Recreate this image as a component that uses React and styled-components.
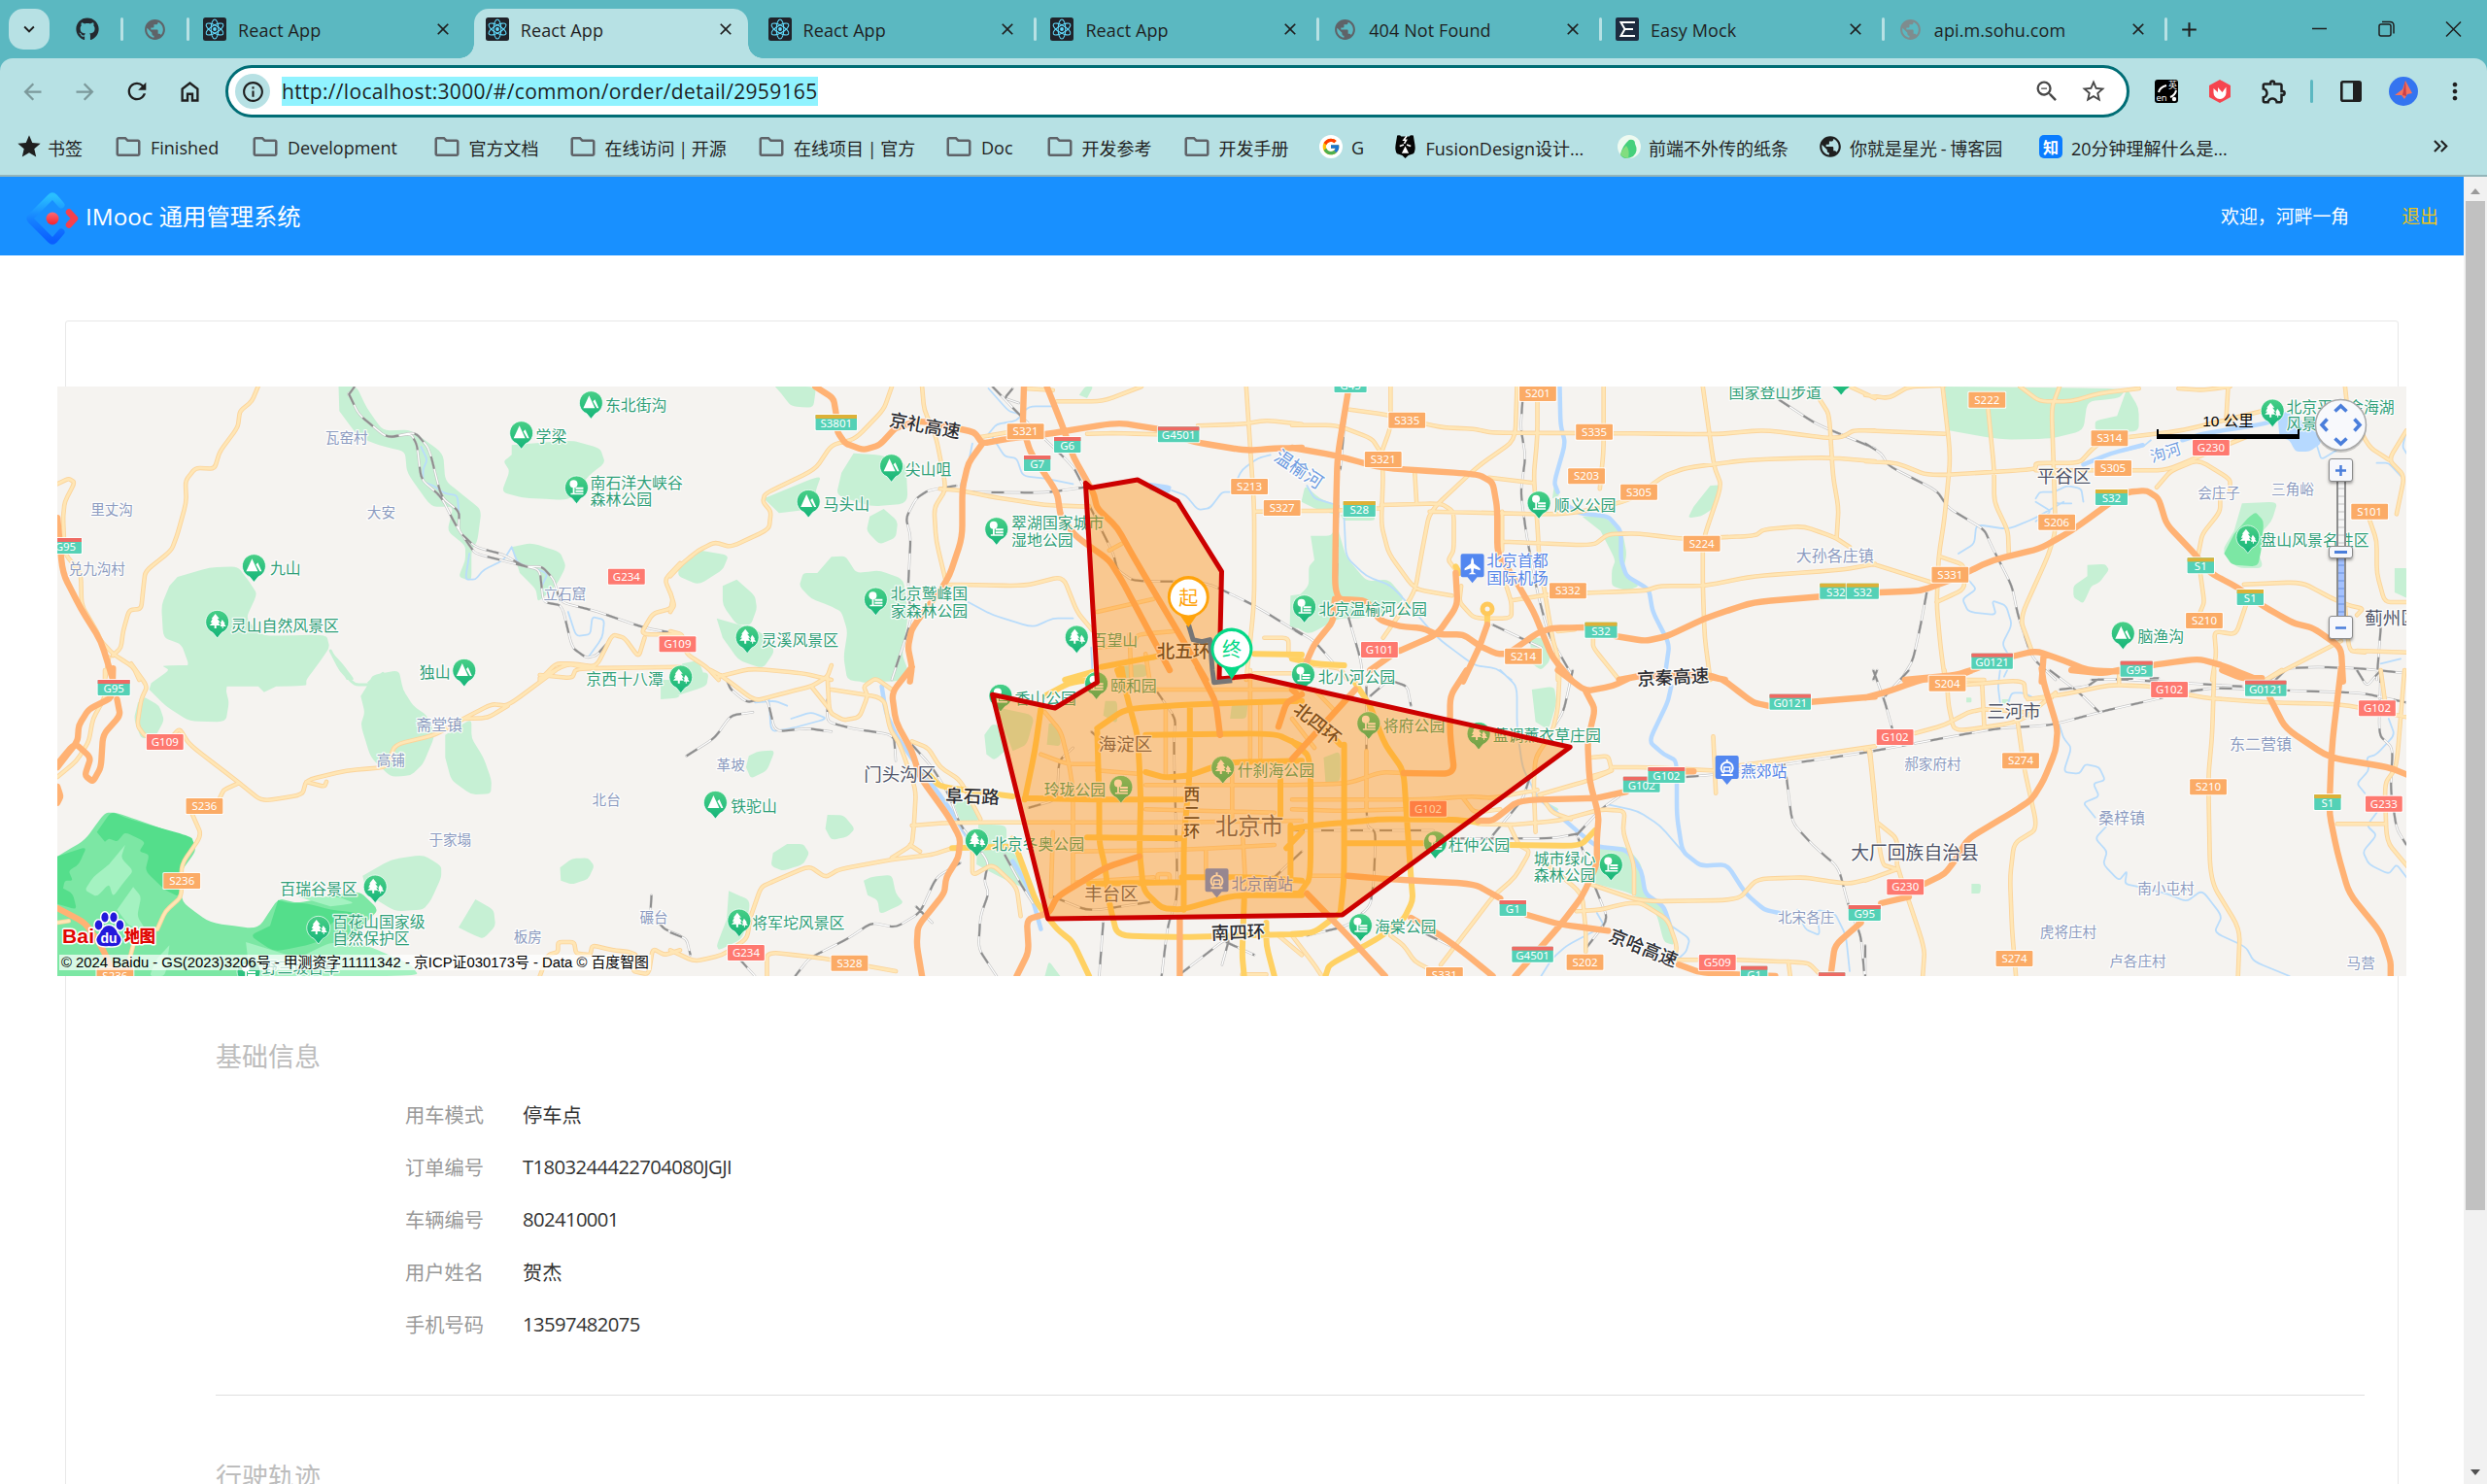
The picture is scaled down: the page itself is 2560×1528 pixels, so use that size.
import React from "react";
import styled, { createGlobalStyle, css } from "styled-components";
import { FaGithub } from "react-icons/fa";
import { FcGoogle } from "react-icons/fc";
import {
  MdArrowBack, MdArrowForward, MdRefresh, MdInfoOutline, MdStarBorder, MdStar,
  MdMoreVert, MdOutlineExtension, MdPublic, MdClose, MdAdd, MdKeyboardArrowDown,
  MdZoomOut, MdOutlineFolder, MdKeyboardDoubleArrowRight,
} from "react-icons/md";

const Global = createGlobalStyle`
  html, body { margin: 0; padding: 0; overflow: hidden; background: #fff; }
  * { box-sizing: border-box; }
  body { font-family: "Open Sans", "Noto Sans CJK SC", sans-serif; color: #1f1f1f; }
`;

const Window = styled.div`
  width: 2560px; height: 1528px; display: flex; flex-direction: column; overflow: hidden;
`;

/* ---------- browser chrome ---------- */
const TabStrip = styled.div`
  height: 60px; flex: none; background: #5bb8c1; display: flex; align-items: center; padding-left: 9px;
`;
const SearchTabs = styled.div`
  width: 42px; height: 42px; border-radius: 15px; background: #b7e1e4;
  display: flex; align-items: center; justify-content: center;
`;
const Pinned = styled.div`
  display: flex; align-items: center; justify-content: center;
  width: ${(p) => p.$w}px; padding-left: ${(p) => p.$pad || 0}px; height: 60px;
`;
const Divider = styled.i`
  width: 3px; height: 24px; border-radius: 2px; flex: none;
  background: ${(p) => (p.$hidden ? "transparent" : "#b7e1e4")};
`;
const TabSlot = styled.div`
  width: 290.8px; height: 60px; display: flex; align-items: center; flex: none;
`;
const TabBody = styled.div`
  position: relative; flex: 1; align-self: stretch; margin: 9px 4px 0 2px; padding: 0 13px 9px 12px;
  display: flex; align-items: center; gap: 12px; font-size: 18px; color: #1f1f1f;
  border-radius: 15px 15px 0 0;
  ${(p) => p.$active && css`
    background: #b7e1e4;
    &::before, &::after { content: ""; position: absolute; bottom: 0; width: 15px; height: 15px; }
    &::before { left: -15px; background: radial-gradient(circle at 0 0, transparent 14.5px, #b7e1e4 15px); }
    &::after { right: -15px; background: radial-gradient(circle at 100% 0, transparent 14.5px, #b7e1e4 15px); }
  `}
`;
const TabTitle = styled.span`
  flex: 1; white-space: nowrap; letter-spacing: 0.1px; position: relative; top: 1px;
`;
const WinButtons = styled.div`
  margin-left: auto; display: flex; padding-right: 0;
  svg { width: 69px; height: 24px; }
`;
const Chrome = styled.div`
  background: linear-gradient(#5bb8c1, #5bb8c1) 0 0/100% 14px no-repeat; height: 122px; flex: none;
`;
const ChromeInner = styled.div`
  background: #b7e1e4; height: 122px; border-radius: 13px 13px 0 0; border-bottom: 2px solid #93b5b9;
`;
const Toolbar = styled.div`
  height: 68px; display: flex; align-items: center;
`;
const NavButton = styled.div`
  width: 54px; display: flex; justify-content: center; color: ${(p) => (p.$dim ? "#7c999b" : "#1f1f1f")};
`;
const NavGroup = styled.div`
  display: flex; align-items: center; padding-left: 6px;
`;
const Omnibox = styled.div`
  width: 1960px; height: 54px; border: 3px solid #006d75; border-radius: 27px; background: #fff;
  display: flex; align-items: center; padding: 0 20px 0 7px; margin-left: 10px;
`;
const InfoChip = styled.div`
  width: 36px; height: 36px; border-radius: 50%; background: #b7e1e4; display: flex;
  align-items: center; justify-content: center; margin-right: 12px;
`;
const Url = styled.span`
  font-size: 21px; line-height: 30px; background: #90f3ff; white-space: nowrap; letter-spacing: 0.32px;
`;
const OmniIcons = styled.div`
  margin-left: auto; display: flex; gap: 20px; color: #474747;
`;
const Extensions = styled.div`
  display: flex; align-items: center; flex: 1; padding-left: 26px;
`;
const Slot = styled.div`
  width: ${(p) => p.$w}px; display: flex; align-items: center;
`;
const ToolDivider = styled.i`
  width: 3px; height: 24px; background: #5bb8c1; border-radius: 2px;
`;
const Bookmarks = styled.div`
  height: 45px; display: flex; align-items: center; padding-left: 16px;
`;
const Bookmark = styled.div`
  width: ${(p) => p.$w}px; display: flex; align-items: center; flex: none; font-size: 18px; white-space: nowrap;
  svg { flex: none; }
  span { margin-left: ${(p) => p.$gap}px; position: relative; top: 1px; word-spacing: -1px; }
`;
const ZhiBadge = styled.b`
  width: 24px; height: 24px; border-radius: 5px; background: #0a7cff; color: #fff; font-size: 16px;
  display: flex; align-items: center; justify-content: center;
`;

/* ---------- page ---------- */
const Viewport = styled.div`
  flex: 1; min-height: 0; display: flex;
`;
const Page = styled.div`
  width: 2536px; height: 100%; overflow: hidden; background: #fff;
`;
const Header = styled.header`
  height: 81px; background: #1890ff; color: #fff; display: flex; align-items: center; padding: 0 26px 0 27px;
`;
const Brand = styled.div`
  display: flex; align-items: center; gap: 7px; font-size: 24.3px; white-space: nowrap; height: 81px;
  span { position: relative; top: -1px; }
  svg { position: relative; top: 2px; }
`;
const UserArea = styled.div`
  margin-left: auto; display: flex; gap: 54px; font-size: 18.9px; padding-bottom: 2px;
`;
const Logout = styled.a`
  color: #f0c414;
`;
const Card = styled.section`
  margin: 67px 67px 0; border: 1px solid #e8e8e8; border-radius: 3px; height: 1400px; padding-top: 67px;
`;
const MapBox = styled.div`
  position: relative; width: 2418px; height: 607px; margin-left: -9px; overflow: hidden; background: #f5f3f0;
`;
const MapSvg = styled.svg`
  display: block; width: 2418px; height: 607px;
  font-family: "Noto Sans", "Noto Sans CJK SC", sans-serif;
`;
const Copyright = styled.div`
  position: absolute; left: 2px; bottom: 6px; padding: 0 2px; background: rgba(255,255,255,.7); color: #000;
  font: 14.85px/16px "Liberation Sans", "Noto Sans CJK SC", sans-serif; white-space: nowrap;
`;
const ScaleBar = styled.div`
  position: absolute; left: 2161px; top: 25px; width: 147px; height: 29px; text-align: center;
  font: 15.5px/21px "Liberation Sans", "Noto Sans CJK SC", sans-serif; color: #000;
  border-bottom: 5px solid #000;
  &::before, &::after { content: ""; position: absolute; bottom: -5px; width: 2px; height: 10px; background: #000; }
  &::before { left: 0; }
  &::after { right: 0; }
`;
const ZoomControl = styled.div`
  position: absolute; left: 2338px; top: 74px; width: 25px; display: flex; flex-direction: column; align-items: center;
`;
const ZoomButton = styled.div`
  width: 25px; height: ${(p) => p.$h || 24}px; border: 1.5px solid #8a8a8a; border-radius: 3px; background: #f6f7fb;
  box-shadow: 0 2px 3px rgba(0,0,0,.35); display: flex; align-items: center; justify-content: center;
  position: relative; z-index: 1;
`;
const Track = styled.div`
  width: 10px; height: ${(p) => p.$h}px; border: solid #8d8d8d; border-width: 0 2px;
  background: repeating-linear-gradient(${(p) => (p.$filled ? "#a3c1ff" : "#f6f6f6")} 0 6.5px, ${(p) => (p.$filled ? "#86a9ee" : "#dcdcdc")} 6.5px 8px);
`;
const Detail = styled.div`
  margin: 0 34px 0 154px; padding-top: 63px;
`;
const SectionTitle = styled.h3`
  margin: 0; font-weight: 400; font-size: 27px; line-height: 40px; color: #bdbdbd;
`;
const InfoList = styled.div`
  padding: 12px 0 46px 195px;
`;
const InfoRow = styled.div`
  display: flex; height: 54px; align-items: center; font-size: 20.25px; color: #333;
`;
const InfoLabel = styled.span`
  width: 121px; color: #999;
`;
const InfoValue = styled.span`
  letter-spacing: ${(p) => (p.$latin ? -0.6 : 0)}px;
`;
const Rule = styled.div`
  height: 1px; background: #dfdfdf; margin-bottom: 64px;
`;
const ScrollRail = styled.div`
  width: 24px; background: #f1f1f1; display: flex; flex-direction: column; align-items: center;
`;
const ScrollThumb = styled.div`
  width: 20px; height: 1039px; background: #c1c1c1; margin-top: 7px;
`;
const ScrollArrow = styled.i`
  width: 0; height: 0; border: solid transparent; border-width: 0 5px;
  ${(p) => p.$up ? "border-bottom: 6px solid #9a9a9a; margin-top: 12px;" : "border-top: 6px solid #505050; margin-top: auto; margin-bottom: 9px;"}
`;

/* ---------- small drawings ---------- */
const ReactFavicon = () => (
  <svg width="24" height="24" viewBox="0 0 24 24">
    <rect width="24" height="24" rx="2.5" fill="#20232a" />
    <g fill="none" stroke="#61dafb" strokeWidth="1.1">
      {[0, 60, 120].map((a) => <ellipse key={a} cx="12" cy="12" rx="10" ry="3.8" transform={`rotate(${a + 30} 12 12)`} />)}
    </g>
    <circle cx="12" cy="12" r="1.9" fill="#61dafb" />
  </svg>
);
const EasyMockIcon = () => (
  <svg width="24" height="24" viewBox="0 0 24 24">
    <rect width="24" height="24" rx="2" fill="#1d2b3f" />
    <path d="M20 5H5.500l4 7H18M9.500 12l-4 7H20" fill="none" stroke="#fff" strokeWidth="2" />
  </svg>
);
const HomeIcon = () => (
  <svg width="27" height="27" viewBox="0 0 24 24" fill="none" stroke="#1f1f1f" strokeWidth="2.1">
    <path d="M5 20V9.5L12 4l7 5.5V20h-4.800v-6H9.800v6z" />
  </svg>
);
const BrandLogo = () => (
  <svg width="54" height="54" viewBox="0 0 54 54">
    <defs>
      <linearGradient id="bl" x1="0" y1="0" x2="0" y2="1"><stop offset="0" stopColor="#29bfff" /><stop offset=".5" stopColor="#1683ff" /><stop offset="1" stopColor="#0a5fff" /></linearGradient>
      <linearGradient id="rd" x1="0" y1="0" x2="0" y2="1"><stop offset="0" stopColor="#fa6a75" /><stop offset="1" stopColor="#f5222d" /></linearGradient>
    </defs>
    <path d="M36 13 29 5q-2-2-4 0L5 25q-2 2 0 4l20 20q2 2 4 0l7-8" fill="none" stroke="url(#bl)" strokeWidth="7" strokeLinecap="round" />
    <path d="M44 20.500 50 27l-6 6.500" fill="none" stroke="#f7404c" strokeWidth="6.500" strokeLinecap="round" strokeLinejoin="round" />
    <circle cx="27" cy="27" r="6.500" fill="url(#rd)" />
  </svg>
);
const PandaIcon = () => (
  <svg width="25" height="25" viewBox="0 0 24 24">
    <path d="M4 1.500q3-1 4 1h8q1-2 4-1l1.500 9q1 6-1.500 9l-5 1.500-3 3-3-3-5-1.500q-2.500-3-1.500-9z" fill="#050505" />
    <path d="M13.500 2l-3 4h2.500l-2 3.500" fill="none" stroke="#fff" strokeWidth="1.500" />
    <path d="M6.500 12l4-1.500M17.500 12l-4-1.500" stroke="#fff" strokeWidth="1.500" />
    <path d="M12 12l3.500 7h-7z" fill="#fff" />
  </svg>
);
const ParrotIcon = () => (
  <svg width="24" height="24" viewBox="0 0 24 24">
    <circle cx="12" cy="12" r="12" fill="#eefaf1" />
    <path d="M3 20Q5 11 12 5q6-1 6 4 4 8-2 13-3 2-8 2-4-1-5-4z" fill="#45d07c" />
    <path d="M3 20Q5 14 9 11q4 5 2 13-6-1-8-4z" fill="#82dd7f" />
  </svg>
);
const TranslateIcon = () => (
  <svg width="24" height="24" viewBox="0 0 24 24">
    <rect width="24" height="24" rx="3" fill="#000" />
    <path d="M4 13Q5 8 12 6M22 11q-1 5-6 7" stroke="#fff" strokeWidth="2" fill="none" />
    <text x="1.500" y="22" fontSize="9.500" fill="#fff">en</text>
    <text x="14" y="9" fontSize="9" fill="#fff">英</text>
    <circle cx="20" cy="20" r="2.200" fill="#fff" />
  </svg>
);
const HexIcon = () => (
  <svg width="24" height="26" viewBox="0 0 24 26">
    <path d="M12 1l11 6v12l-11 6-11-6V7z" fill="#f6454f" />
    <path d="M5.500 10v4.500a6.500 6.500 0 0 0 13 0V8.500l-4 5.500-4.500-5v5z" fill="#fff" />
  </svg>
);
const PanelIcon = () => (
  <svg width="22" height="22" viewBox="0 0 22 22"><rect x="1.300" y="1.300" width="19.400" height="19.400" rx="1.500" fill="none" stroke="#1f1f1f" strokeWidth="2.600" /><path d="M13 1h8v20h-8z" fill="#1f1f1f" /></svg>
);
const Avatar = () => (
  <svg width="30" height="30" viewBox="0 0 30 30">
    <circle cx="15" cy="15" r="15" fill="#3474f0" />
    <path d="M17 4l7 13-5 1-3 5-3-4-7 0 8-6z" fill="#f4715f" /><path d="M17 4l1 16-4-1z" fill="#c9404b" />
  </svg>
);

/* ---------- map data ----------
   Every map sheet keeps its own survey grid: [originX, originY, unitsPerX]. */
const SHEETS = {
  a: [50, 390, 0.41454], b: [50, 690, 0.41454], c: [690, 390, 0.41454], d: [690, 690, 0.41454],
  e: [1330, 390, 0.38265], f: [1330, 690, 0.38265], g: [1920, 390, 0.40816], h: [1920, 690, 0.40816],
};
const at = (s, x, y) => [SHEETS[s][0] + x * SHEETS[s][2], SHEETS[s][1] + y / 3];
const pts = (s, str) =>
  str.trim().split(/\s+/).map((p) => {
    const [x, y] = p.split(",").map(Number);
    return at(s, x, y).map((n) => n.toFixed(1));
  });
/* rounds the corners by running quadratic curves through segment midpoints */
const line = (s, str) => {
  const q = pts(s, str);
  let d = `M${q[0]}`;
  for (let i = 1; i < q.length - 1; i++) {
    const m = [(+q[i][0] + +q[i + 1][0]) / 2, (+q[i][1] + +q[i + 1][1]) / 2];
    const n = [(+q[i - 1][0] + 3 * +q[i][0]) / 4, (+q[i - 1][1] + 3 * +q[i][1]) / 4];
    const k = [(3 * +q[i][0] + +q[i + 1][0]) / 4, (3 * +q[i][1] + +q[i + 1][1]) / 4];
    d += `L${n}Q${q[i]} ${k}L${m}`;
  }
  return d + `L${q[q.length - 1]}`;
};
const area = (s, str) => line(s, str) + "Z";
const join = (fn, data) => Object.entries(data).map(([s, list]) => list.split("/").map((l) => fn(s, l)).join("")).join("");

const PARKS = {
  a: "720,24 765,24 790,90 830,160 900,158 980,230 985,315 1035,365 1075,405 1065,500 1050,530 1050,625 1018,612 1035,560 1035,515 990,470 1005,395 950,395 890,290 885,225 820,205 770,180 722,100/1150,205 1300,190 1370,215 1382,260 1340,300 1320,340 1290,375 1180,368 1125,350 1145,285 1130,255 1150,235/320,612 400,583 470,580 500,630 518,665 490,740 530,795 690,790 698,830 670,880 640,930 640,950 280,950 280,930 350,890 330,820 285,800 280,700 300,640/1150,520 1200,507 1270,535 1285,580 1260,640 1215,690 1210,650 1170,600/700,840 730,880 760,930 740,930/810,915 870,905 875,940 790,940",
  b: "255,40 300,0 280,-15 460,-15 440,60 448,100 440,160 350,158 290,110 250,60/465,-20 640,-20 590,35 535,68/240,85 275,110 287,155 265,205 230,212 212,150 222,100/790,50 805,15 870,0 880,60 905,110 940,140 960,200 930,290 900,325 850,330 800,270 775,170 785,130 775,80/985,200 1050,150 1050,210 1080,270 1100,340 1098,382 1050,385 1000,340 985,270/780,635 850,585 930,570 975,605 975,640 950,710 930,740 860,745 790,690/1270,610 1300,582 1340,580 1355,605 1340,645 1300,662 1272,650/1060,708 1105,740 1110,790 1080,830 1050,815 1018,795/1520,30 1568,30 1568,85 1520,90",
  c: "260,24 362,24 355,90 300,85 275,45/455,230 520,235 585,260 590,385 500,395 412,360 425,290/232,370 375,297 360,350 370,400 270,415/530,402 565,440 560,490 520,512 487,470 495,425/75,530 145,545 130,590 70,637 20,610 20,575/400,550 435,548 462,600 520,592 580,620 590,740 575,850 590,900 570,935 440,935 430,860 440,780 425,720 395,700 350,680 320,640 330,600 365,600/165,620 210,670 215,710 200,760 165,760 130,700 130,640/115,740 225,780 260,840 230,895 170,870 130,800/1015,50 1030,24 1050,24 1035,60/1540,670 1568,665 1568,770 1538,770/1110,890 1180,880 1185,920 1120,925/30,880 70,870 90,935 0,935",
  d: "450,0 520,0 510,30 480,40 450,25/0,0 60,0 95,10 90,50 0,85/780,200 800,165 830,180 840,240 805,278 785,260/195,265 220,250 260,248 240,310 200,335 188,300/390,447 430,448 458,490 440,515 400,525 385,490/290,537 330,537 345,565 330,600 280,620 250,605 255,565/480,650 500,638 550,632 560,690 580,720 520,755 515,710 490,695/145,682 200,712 180,830 120,865 115,850 140,770/700,400 740,400 770,465 720,465/765,475 835,480 835,540 870,590 890,680 820,640 760,600/930,945 940,898 968,945/810,115 905,140 885,230 850,250/940,165 965,165 970,235 935,230/1080,95 1110,95 1110,165 1075,140/1395,100 1435,95 1430,150 1390,150",
  e: "50,485 105,485 120,450 145,550 200,625 260,620 305,680 240,725 180,740 125,740 45,790 0,760 0,690 45,640 45,580 60,560/25,380 35,330 75,370 120,390 115,420 60,400/705,330 720,360 700,370/780,425 840,425 890,480 900,540 890,600 935,640 900,655 860,640 860,590 870,560 830,470/1125,330 1155,328 1140,395 1100,425 1065,430 1080,395/640,800 685,800 695,870 670,900 645,880/130,420 222,420 222,438 140,438",
  f: "645,60 705,50 712,100 690,185 655,160/820,545 900,545 940,600 950,690 970,700 1010,750 1030,850 1000,840 980,750 915,690 815,660/85,270 130,250 130,345 90,345/670,400 720,430 700,440",
  g: "200,24 660,30 640,60 560,70 550,160 470,185 340,188 212,160/660,30 690,90 690,165 580,160 580,130 635,115/950,385 1040,380 1025,440 980,500 1005,585 940,585 905,540 905,520 930,470/560,575 605,572 615,590 590,630 570,640 550,695 525,675 525,640 560,610/1335,585 1370,585 1370,680 1335,660",
  h: "255,85 268,85 268,100 255,100/268,660 292,660 290,690 268,690/345,90 368,90 360,105 345,102",
};
const FOREST_MID = {
  b: "10,590 22,575 90,525 140,440 170,440 360,525 365,560 330,620 330,715 400,780 520,800 570,705 620,720 770,680 820,740 780,790 720,860 600,945 560,960 10,960",
  g: "930,480 965,430 985,412 1005,440 1000,520 990,580 925,575 905,540",
};
const FOREST_DARK = {
  b: "120,500 155,437 200,460 355,515 362,540 330,600 325,700 290,680 240,620 250,570 225,560 240,530 190,500 170,530 150,520 140,530/22,575 95,545 75,600 50,620 60,650 40,650 35,680 15,690 15,580/570,710 600,720 640,720 700,740 770,750 700,780 690,830 640,850 560,870 500,820 550,790/15,660 60,690 70,740 15,720",
};
const FOREST_LIGHT = {
  b: "190,540 180,580 210,620 190,650 160,700 150,660 120,700 90,680 110,640 150,600/490,840 620,890 700,840 790,850 900,910 920,945 500,945/620,700 720,700 760,720 700,730/210,670 230,700 220,760 240,800 200,790 170,740/300,850 290,945 250,945 270,890",
};
const WATER_AREAS = {
  c: "1190,320 1245,330 1240,355 1190,345",
  g: "1040,120 1060,100 1100,130 1140,160 1150,200 1120,225 1085,225 1070,190 1045,180",
};
const WATER = {
  a: "925,210 940,250 930,280 930,318 955,330 985,355 1015,360 1020,430/1150,520 1165,570 1240,600 1225,640/1045,540 1035,620 1060,620 1080,590 1130,560 1150,520/1290,720 1310,795 1345,790 1350,735 1380,745 1375,800 1340,860",
  c: "790,30 840,100 870,110/750,200 740,260 720,330/800,180 830,240 860,245 875,300 940,310 1000,325/790,170 810,140 860,130 890,85 960,85/1245,345 1280,360 1310,405 1340,400 1370,350 1400,350/1400,330 1420,280 1460,245 1490,235/740,690 800,730 900,768 950,740 1000,740/1045,830 1048,900",
  d: "245,90 250,190 300,180 390,150 350,130 300,150/210,100 260,95 290,110",
  e: "140,430 145,550 200,610 270,640 390,800 490,885 550,895 590,930/40,330 60,370 120,390",
  f: "560,0 605,50 605,180 620,300 650,370/850,415 930,435 990,480 1050,560/820,750 840,790 740,850 700,890 670,945/1360,740 1380,800 1420,820 1410,740 1460,750 1490,820 1500,930/1020,790 1070,830 1060,870 1040,890",
  g: "550,265 620,230 700,210 720,190/520,385 480,385 475,350 510,330 545,340 550,380/430,370 440,350 475,350/430,440 470,410 430,380/235,540 275,510 280,450 360,465 430,430 500,380/210,610 260,620 280,650 245,680 260,720 330,730 320,685 355,700 370,760 345,820 370,870 350,920/1140,210 1150,250 1190,220/1290,260 1320,260 1350,300/1365,160 1355,210 1365,230/1300,880 1350,865",
  h: "340,100 335,50 340,0/360,100 370,70 400,70 430,90/490,170 500,210 520,240 500,315 540,320 555,290 590,300 605,340 575,350 590,390 550,410 570,440 580,455/610,480 580,520 610,560 600,600 640,650 660,620 655,660 690,670 760,690 810,715 850,680 900,760 880,810 960,855 980,900 1070,945/1320,150 1335,200 1290,260 1265,270 1270,310 1240,350 1260,380/1290,440 1265,480 1290,510 1255,560 1270,600 1320,630 1340,600 1365,640",
};
const RIVERS = {
  d: "525,50 535,130 560,200 610,290 660,370 700,440 735,510/850,590 880,650 900,710 920,800",
  e: "720,24 722,140 735,200 705,320 715,350/740,390 770,415 850,425 885,470 885,560 900,610 960,650 970,720 1015,820 1005,900",
  f: "1020,50 1010,100 960,220 1000,260 1035,280 1035,450 1050,560 1100,605 1170,600 1220,690 1270,740 1310,750/650,380 700,430 770,500 820,545 900,555 940,620 950,690 1000,730 1020,800",
  g: "550,265 620,230 700,205/800,190 850,170 1000,140 1030,130",
};
const RAILS = {
  a: "745,45 770,110 840,182 900,170 915,205 925,310 975,365 1010,450 1045,515 1060,540 1170,575 1220,590 1228,690 1275,700 1300,830 1335,862 1360,855 1385,820/760,24 745,50/780,120 840,182 910,165 945,215 975,365 1020,410 1018,470 1060,520 1130,543 1180,580 1225,580 1255,620 1270,690 1360,718 1475,768 1568,790",
  b: "1497,695 1495,740/1515,780 1530,800 1568,820",
  c: "800,24 870,115 1000,270 1025,330/850,30 830,60 865,75/710,330 640,345 610,370 585,430 597,490 590,650 600,740 550,930/725,350 930,352 1030,335/1040,390 1100,540 1110,590 1150,625 1330,628 1450,700 1568,790",
  d: "140,30 150,60 190,100 240,85 260,190 340,180 400,190/40,265 110,210 150,140 205,130/390,90 390,160 450,180 555,200 560,280/600,230 650,300 690,380 720,480 790,590 780,650 790,690 770,760 765,860 810,945/720,595 660,640 620,750 560,795 500,780 440,830 345,890 310,945/830,570 870,660 900,720/890,425 960,400 965,280 1000,240/1045,190 1100,250/1205,60 1255,150 1250,220 1260,700 1235,790 1220,945/1568,560 1500,640/1075,780 1065,945/950,700 1040,745 1200,715/1265,940 1390,820 1370,910/0,810 40,830 50,880/170,890 210,945/610,730 650,780/1380,840 1450,880",
  e: "145,90 130,280/125,300 120,640/150,730 185,870 190,930/0,770 60,810 150,930/620,70 615,150 628,240 615,350 630,480 660,660 690,790 750,910/540,760 670,830/1310,65 1410,140 1568,215",
  f: "200,50 200,480 225,500 220,650 210,730 150,790 40,820/210,80 260,30 310,50 320,110/755,0 730,130 690,200/640,330 620,400 540,510/430,520 700,520 770,505/765,510 830,430 880,390/770,520 790,580/815,670 850,770 790,860/1060,330 1160,320 1568,250/1330,330 1345,470 1400,540 1470,610 1500,740 1530,820 1540,945/360,815 440,860/0,495 380,495",
  g: "0,200 40,230 60,270 180,345 210,400 300,465 320,520 370,640 385,730 420,860 480,930/155,660 140,760 120,870 90,930/1020,930 1060,895 1140,890 1250,895 1365,910/1300,770 1290,930/30,900 20,930/570,930 740,925",
  h: "20,250 330,180 470,170 590,130 750,85/20,0 50,100 70,190/465,0 540,70 590,130/490,60 560,50 590,25 950,50/820,65 880,55 1060,63 1250,70 1365,100/1035,30 1060,0/1300,0 1295,200 1330,240 1325,370 1340,490 1365,540/1240,0 1265,50 1300,0/110,0 50,80/0,850 0,945",
};
const LOCAL = {
  a: "520,24 505,70 475,100 470,150 425,225 412,278 365,275 340,315 342,380 320,480 305,530 240,595 235,650 230,710 200,715 185,780 180,830 160,855/22,325 50,308 65,320 40,380 36,430 40,540 80,600 82,700 120,780 130,810 160,850 210,890 225,930/1568,570 1530,620 1550,680 1545,710 1500,725 1470,790 1568,790/1220,930 1260,880 1300,880 1360,890 1400,790 1430,800 1465,860 1480,800/1220,925 1290,880 1340,895 1568,890/140,930 150,860",
  b: "205,-20 245,50 230,90 220,170 240,205 300,215 325,180 350,230 470,345 530,405 630,385 640,340 740,310 840,300 860,230 960,200 1030,150 1100,105 1140,110 1260,0/1030,150 1090,148 1140,110/140,0 140,85 110,150 100,220 70,280 22,330/470,350 435,370 425,395/355,440 380,510 330,600 330,700 290,745 270,800/1220,945 1240,880 1265,870 1265,840 1305,840 1310,875 1345,880 1350,850 1400,865 1440,870 1460,880 1450,930 1490,940 1500,860 1530,880 1568,865/210,850 190,945/1220,15 1300,25 1310,-5 1568,-10/640,345 685,360 690,345/22,780 50,775",
  c: "550,24 530,95 460,185 400,205 360,280 235,355 230,380 250,410 245,465 150,520 110,505 70,530 30,570 0,610/625,24 630,95 660,180 685,340 655,400 660,500 685,630/770,180 840,165/670,340 720,345 800,365 930,390 1040,395/685,635 880,640 975,610 1010,720 1050,780/960,70 1075,70 1170,24/1035,170 1100,168 1210,172/1430,24 1440,210 1450,400 1450,690 1430,930/1310,145 1420,140 1480,128 1568,140/880,30 950,35/0,660 10,700 0,720/0,780 30,790 40,850 90,890 120,930/120,920 200,895 330,910 400,930/1450,410 1480,410/1475,800 1535,800 1535,860 1568,860/1450,910 1568,910/1060,720 1200,680/1090,530 1120,510/1140,790 1145,930/1180,850 1190,930/1060,830 1150,820 1160,790 1250,780",
  d: "100,0 130,20 210,95 270,75 350,50 390,20 400,-15/390,20 395,130 430,155 470,145 490,80 480,50 510,25 550,60/350,50 395,120/400,60 530,85 545,180 570,230 610,370 605,480 600,540 550,580/600,220 640,240 670,300 720,340 770,460/600,480 700,470 1260,470 1568,465/200,760 225,670 260,650 345,605 385,640 420,615 550,585 650,570 700,550/595,540 620,560/200,760 190,830 130,880 60,900 0,865/240,945 240,870 380,890 560,930/750,560 750,635 800,600 860,670 870,760/920,260 985,290 1060,290/930,130 970,190 990,290 1000,370 1000,660/950,500 945,700/1010,655 1200,640/1440,0 1440,270/1200,60 1568,60/1000,560 1270,555 1500,540/1420,480 1430,700/1180,355 1568,355/1230,110 1230,320/1395,300 1395,460/1330,640 1330,560/1180,430 1500,440/1210,650 1210,630 1240,630 1240,655/1465,100 1465,270/1480,940 1420,940/1510,820 1568,880/1060,310 1160,320",
  e: "0,143 120,143 215,185 240,230 245,300 240,450 260,540 330,650 430,670/155,95 250,110 400,150 490,155 540,167 850,168 1140,172 1270,158 1440,183 1480,180 1510,160 1568,160/265,24 265,150 240,230/605,24 600,190 500,270 370,410 350,530 330,660 245,800/660,24 660,180 650,300 660,450 665,560 700,800 715,860 715,930/838,24 838,220 828,340/240,390 400,385 435,410 435,530 420,560 440,590/370,410 740,420 910,375 1000,300 1060,275 1230,250 1440,243 1568,255/565,410 565,530/570,503 810,515 850,480 930,478 1050,495 1245,485 1270,465 1375,455 1460,490 1500,520/530,305 650,322/1105,24 1135,270 1155,330 1105,500 1105,640 1110,800 1125,930/590,685 700,665 950,655 990,640 1110,640 1240,610 1480,590 1568,572/455,640 450,690 490,740 590,740 590,690 565,600/810,800 810,830 880,930/1420,65 1445,110 1455,300 1470,400 1465,490/20,408 100,408 240,400/330,290 335,385/715,780 760,775/1500,24 1568,60/60,885 130,895 150,930",
  f: "0,355 150,350 240,315 300,318/0,400 350,400 480,390 540,395 660,370/0,430 130,435 300,430/50,635 150,635/720,0 715,120 700,190 655,270 650,350 655,500/805,270 850,265 860,310 800,330/860,300 950,300 1130,310/665,385 800,340 860,310/1133,205 1140,380/1165,300 1300,280 1568,235/500,475 590,478 720,465 830,430 895,435 890,500 920,600 920,690/585,480 610,540 640,560 600,640 540,700 500,760 400,910/670,390 700,440 750,460/680,595 780,690 790,800 790,870/800,660 940,715 1200,710 1250,645 1380,640 1430,650 1500,660 1568,640/765,745 830,740 900,720 940,720 1010,770 1035,850 1030,895 1090,895/1195,895 1310,900 1330,900 1390,905 1420,940/1335,900 1340,945/265,820 300,850 330,900 380,930/0,820 60,910 80,945/1555,250 1568,400/60,60 110,120/200,250 200,430/0,150 60,240/460,395 490,440 560,430",
  g: "0,50 60,60 110,24 200,20/195,24 215,240 200,430 185,550 180,700 190,830 200,920/310,95 325,280 325,380 360,470 362,540/390,24 440,70 520,70 590,45 690,30/490,24 470,90 475,270 480,470 460,550 390,740 420,840/0,160 200,170/0,255 80,260 160,300 430,280 430,260 540,260 570,220 590,200/665,180 800,160 1000,100/430,283 590,283/668,283 760,283 900,210 960,180/735,335 770,285 840,250 920,310 920,345/895,355 895,410 850,480 840,540/845,600 855,690 845,720/955,635 1100,628 1180,680 1220,700 1255,710 1240,730/960,700 935,790 880,780 885,850 875,930/915,24 910,130/1270,430 1290,500 1290,600 1310,690 1365,690/1340,418 1360,300 1320,250 1365,160/1210,24 1215,80 1270,210 1320,250/1240,840 1365,845/1210,700 1220,840 1260,845/1010,930 1200,810/190,550 250,575 250,650 180,690/0,565 170,630/790,30 850,35 920,24",
  h: "205,20 210,110 225,190 390,160 480,70/200,0 205,50 400,30 405,90 470,85/0,245 10,240 40,600 80,615/125,195 200,170 260,130 300,120 400,130/295,50 300,170/385,165 400,300 435,490 375,535 365,640 370,800 380,945/80,600 90,640 150,860 145,945/0,650 80,615/30,470 80,520 80,600/410,90 500,75 620,45 720,50 850,85 1010,100 1200,105 1365,145/880,0 875,200 865,330 870,650 945,800 940,945/1300,0 1310,90/1190,475 1310,475/1360,0 1340,300 1310,350 1315,530 1370,610/640,0 640,40/1010,30 1050,0/190,30 300,30",
};
const RINGS = {
  c: "1070,890 1220,855 1235,835/1450,850 1568,852/1110,900 1120,935/1050,905 980,930",
  d: "1120,-10 1130,60 1140,110 1160,200 1165,300 1168,400 1165,560 1175,680 1220,735 1270,740 1400,695 1568,695/1060,180 1130,120 1300,105 1568,95/1060,190 1065,400 1065,530 1080,610 1090,720 1110,820 1260,825 1568,815/1290,110 1290,320 1275,520 1275,740/880,395 1065,400 1275,400/1035,517 1270,520/920,120 905,250 880,400/1180,200 1500,195 1568,235/1180,315 1230,332 1290,325 1380,285 1568,280/1270,640 1450,640 1568,650/850,520 880,620 910,720 960,800 1000,840 1040,945/640,320 670,360 850,390/930,80 990,40 1040,30/1540,480 1540,640/1480,780 1480,850 1500,945/1425,945 1420,880 1425,710/700,550 840,545/1515,340 1515,450/1040,660 1270,655/1530,550 1568,500",
  e: "0,865 60,880 140,885/525,700 525,760/440,580 450,600",
  f: "140,230 140,640 130,750/0,490 50,480 150,470 200,465 240,460 440,462 500,470/170,40 210,110 250,230 300,310 310,480 320,640 325,710 300,770 230,830 100,910 90,945/150,535 350,535/585,540 775,543 815,495/0,220 50,270 50,640 20,690 0,690/0,815 60,810 130,750/80,170 130,230",
};
const HIGHWAYS = {
  a: "22,430 35,600 80,710 130,810 160,930",
  b: "160,-5 158,85 100,120 75,170 72,220 22,300/170,90 178,140 135,200 130,300 110,345 90,325 105,270 65,225 22,290/22,735 90,780 130,850 165,945/22,360 30,390 22,410",
  c: "360,24 405,60 412,110 415,165 435,200 480,220 520,205 560,150 620,130 700,150 755,165 775,200 840,185 930,172 1110,135 1210,155/775,200 740,260 725,340 725,490 690,620 600,770 590,830 600,890 595,935/878,24 875,150 895,230 960,350 970,430 1010,490 1090,560 1120,620 1150,690 1240,900/935,24 975,150 1000,240 1050,350 1060,400 1110,460 1150,550 1250,760 1330,930/1210,155 1300,195 1430,222 1500,215 1568,213",
  d: "600,-10 550,70 560,160 600,250 620,330 690,450 720,520 715,580 685,640 680,690 615,790 612,850 625,945/860,945 890,870 885,770 940,750 960,700 1080,610 1165,575/1310,-10 1355,100 1365,200/1568,75 1530,100 1510,175/1265,945 1265,770",
  e: "152,30 122,240 118,400 115,680 200,685 235,745 290,765 350,770 390,790 460,790 505,825 550,850 580,850 660,785 700,770 790,768/0,213 120,238 240,275 500,295 540,320 552,400 552,540 600,620 650,720 675,790 700,860 755,935/115,680 110,750 60,820 40,870 35,900/440,600 445,700 390,790 290,840/525,760 505,825 460,935/285,840 210,900/870,795 950,810 1010,795 1110,740 1240,690 1430,672/880,930 950,915/1100,915 1165,930",
  f: "470,0 425,80 425,200 437,320 300,318/715,0 790,65 860,50 920,18 1120,15 1160,30 1240,100 1280,110/790,65 815,120 795,220 800,340 825,450 820,520 820,600 780,700 720,790 600,945/1395,98 1568,82/820,395 900,375/820,395 610,402 540,465 500,465/0,275 170,60/150,635 250,645 490,660 560,705/630,755 720,785 850,805/40,690 150,820 250,945/320,765 400,820 460,870 540,945/1040,910 1100,935 1300,945/1450,935 1460,850 1530,780/1055,313 1080,313/0,60 10,70",
  g: "35,660 140,655 220,620 320,560 440,525 520,470 610,390 660,350 710,345 740,370 760,450 830,540 870,600 940,645 1000,700 1080,755 1130,770 1200,830 1205,935/100,930 230,915 280,895 330,870 430,840 500,870 560,900 640,905 720,885 840,865 900,885 980,925/450,850 445,935",
  h: "0,85 60,65 140,30 190,25/230,20 270,0/445,-5 450,40 485,180 480,250 450,340 420,400 370,440 260,520 225,590 200,630 150,660/110,700 40,720/520,0 600,10 640,0/900,0 950,25 1000,25/1020,85 1060,180 1170,270 1320,300 1370,325/1200,-5 1180,200 1175,280 1170,440 1190,560 1220,690 1300,810 1325,900 1325,945",
};

/* kind: p plain orange, r plain red, t teal with red cap, y teal with yellow cap */
const SHIELDS = {
  a: "42,516,G95,t 1435,611,G234,r",
  b: "162,54,G95,t 289,222,G109,r 387,420,S236,p 331,651,S236,p 165,944,S236,p",
  c: "412,135,S3801,y 882,163,S321,p 1262,172,G4501,t 986,204,G6,t 911,261,G7,t 1438,333,S213,p 1519,399,S327,p 18,820,G109,r",
  d: "188,873,G234,r 445,905,S328,p",
  e: "157,18,G45,t 661,45,S201,p 309,128,S335,p 813,164,S335,p 245,249,S321,p 792,301,S203,p 933,350,S305,p 181,402,S28,y 1102,509,S224,p 742,655,S332,p 831,776,S32,y 1463,656,S32,y 1535,656,S32,y 235,837,G101,r 622,857,S214,p",
  f: "1340,98,G0121,t 940,353,G102,t 1007,324,G102,t 366,428,G102,r 594,735,G1,t 647,878,G4501,t 788,902,S202,p 410,942,S331,p 1144,903,G509,r 1243,938,G1,t 1540,750,G95,t 1452,958,G1,t",
  g: "307,65,S222,p 616,184,S314,p 872,213,G230,r 625,276,S305,p 621,366,S32,y 483,443,S206,p 214,605,S331,p 846,577,S1,y 971,675,S1,y 855,747,S210,p 320,872,G0121,t 684,896,G95,t 1272,410,S101,p",
  h: "207,41,S204,p 75,207,G102,r 392,280,S274,p 767,60,G102,r 1010,56,G0121,t 1291,118,G102,r 865,361,S210,p 1166,408,S1,y 1308,413,G233,r 101,670,G230,r 376,891,S274,p",
};
const VILLAGES = [
  ["a", 740, 182, "瓦窑村"], ["a", 157, 405, "里丈沟"], ["a", 826, 413, "大安"], ["a", 120, 588, "兑九沟村"], ["a", 1282, 666, "立石窟"],
  ["b", 970, 170, "斋堂镇", 15.800], ["b", 850, 277, "高铺"], ["b", 1385, 402, "北台"], ["b", 997, 523, "于家塌"], ["b", 1190, 823, "板房"], ["b", 1503, 764, "碾台"],
  ["d", 150, 292, "革坡"], ["e", 1460, 547, "大孙各庄镇", 16], ["f", 1383, 765, "北宋各庄"],
  ["g", 892, 352, "会庄子"], ["g", 1078, 340, "三角峪"],
  ["h", 170, 290, "郝家府村"], ["h", 997, 230, "东二营镇", 16], ["h", 647, 458, "桑梓镇", 16], ["h", 758, 675, "南小屯村"],
  ["h", 512, 810, "虎将庄村"], ["h", 687, 900, "卢各庄村"], ["h", 1250, 905, "马营"],
];
const DISTRICTS = [
  ["d", 1130, 230, "海淀区"], ["d", 570, 322, "门头沟区"], ["d", 1438, 482, "北京市", 23.500], ["d", 1095, 690, "丰台区"],
  ["h", 125, 566, "大厂回族自治县", 18.800], ["g", 501, 300, "平谷区"], ["g", 1328, 738, "蓟州区"], ["h", 375, 128, "三河市"],
];
const ROAD_NAMES = [
  ["c", 632, 145, "京礼高速", 10], ["d", 750, 390, "阜石路", 2], ["d", 1410, 810, "南四环", -2],
  ["f", 1025, 22, "京秦高速", -3], ["f", 68, 165, "北四环", 39], ["f", 945, 858, "京哈高速", 22],
  ["c", 1275, 840, "北五环", 0], ["d", 1295, 385, "西", 0, 17], ["d", 1295, 440, "二", 0, 17], ["d", 1295, 497, "环", 0, 17],
];
/* sheet, pin x, pin y, icon, label x, [[label y, text]] */
const PLACES = [
  ["a", 1347, 73, "m", 1382, [[82, "东北街沟"]]], ["a", 1174, 166, "m", 1210, [[178, "学梁"]]],
  ["a", 1311, 335, "b", 1345, [[322, "南石洋大峡谷"], [374, "森林公园"]]], ["a", 510, 577, "m", 550, [[587, "九山"]]],
  ["a", 419, 750, "t", 453, [[762, "灵山自然风景区"]]], ["a", 1032, 900, "m", 921, [[908, "独山"]]],
  ["d", 26, 20, "t", -209, [[28, "京西十八潭"]]],
  ["b", 811, 668, "t", 575, [[677, "百瑞谷景区"]]], ["b", 670, 795, "t", 705, [[777, "百花山国家级"], [829, "自然保护区"]]],
  ["b", 497, 930, "b", 530, [[920, "野三坡百草"]]],
  ["c", 549, 268, "m", 583, [[280, "尖山咀"]]], ["c", 343, 378, "m", 380, [[388, "马头山"]]],
  ["c", 810, 463, "b", 847, [[445, "翠湖国家城市"], [500, "湿地公园"]]], ["c", 510, 680, "b", 547, [[665, "北京鹫峰国"], [718, "家森林公园"]]],
  ["c", 191, 797, "t", 226, [[808, "灵溪风景区"]]], ["c", 1009, 797, "t", 1046, [[808, "百望山"]]],
  ["d", 112, 408, "m", 150, [[420, "铁驼山"]]], ["d", 820, 78, "b", 855, [[88, "香山公园"]]], ["d", 1058, 40, "b", 1093, [[50, "颐和园"]]],
  ["d", 1119, 360, "b", 928, [[370, "玲珑公园"]]], ["d", 1372, 300, "t", 1408, [[310, "什刹海公园"]]],
  ["d", 761, 525, "t", 798, [[538, "北京冬奥公园"]]], ["d", 171, 773, "t", 203, [[780, "将军坨风景区"]]],
  ["e", 664, 382, "b", 705, [[390, "顺义公园"]]], ["e", 33, 703, "b", 72, [[712, "北京温榆河公园"]]], ["e", 1477, 0, "t", 1175, [[42, "国家登山步道"]]],
  ["f", 30, 12, "b", 70, [[22, "北小河公园"]]], ["f", 206, 163, "b", 245, [[173, "将府公园"]]],
  ["f", 502, 195, "t", 540, [[203, "蓝调薰衣草庄园"]]], ["f", 385, 532, "b", 420, [[540, "杜仲公园"]]],
  ["f", 858, 600, "b", 650, [[583, "城市绿心"], [635, "森林公园"]]], ["f", 184, 787, "b", 222, [[792, "海棠公园"]]],
  ["g", 1027, 98, "t", 1062, [[88, "北京平谷金海湖"], [138, "风景区"]]], ["g", 965, 488, "t", 998, [[500, "盘山风景名胜区"]]],
  ["g", 650, 785, "m", 687, [[797, "脑渔沟"]]],
];
const STATIONS = [
  ["d", 1357, 652, "s", 1393, [[662, "北京南站"]]], ["e", 485, 580, "a", 523, [[563, "北京首都"], [615, "国际机场"]]],
  ["f", 1170, 303, "s", 1207, [[312, "燕郊站"]]],
];

const GLYPHS = {
  m: <path d="M-8 6L-2-7 4 6zM2-1L4-3 8 6H6z" fill="#fff" />,
  t: <path d="M-2-8l4 5H0l3 4H1l2 3h-4v3h-2V4h-5l3-3h-2l2-4h-1zM5-2l3 4H7l2 3H6v2H5V5H3l1-3H3z" fill="#fff" />,
  b: <g fill="#fff"><circle cx="-3" cy="-3.500" r="4" /><path d="M-3.800-1h1.800v8h-1.800zM-1 0h8v2h-8zM-1 3h8v2h-8zM-6 6H7v1.500H-6z" /></g>,
  s: <g fill="none" stroke="#fff" strokeWidth="2"><path d="M-3 5a6 6 0 1 1 6 0M0-9v3M-6 7H6" /><path d="M-3-1h6v4h-6z" strokeWidth="1.500" /></g>,
  a: <path d="M0-9q1.500 1 1.500 6L8 2v2L1.500 2 1 6l3 2H-4l3-2-.5-4L-8 4V2l6.500-5Q-1.500-8 0-9z" fill="#fff" />,
};

const Label = ({ x, y, size = 15.500, color, anchor = "start", weight = 400, rotate, halo = "#fff", children }) => (
  <text x={x} y={y} dy=".36em" fontSize={size} fill={color} textAnchor={anchor} fontWeight={weight}
    stroke={halo} strokeWidth="2.500" strokeOpacity=".85" paintOrder="stroke" strokeLinejoin="round"
    transform={rotate ? `rotate(${rotate} ${x} ${y})` : undefined}>{children}</text>
);

const Shield = ({ x, y, name, kind }) => {
  const w = 20 + name.length * 4.700 - (name.length > 2 ? 1 : 2);
  const base = { p: "#fbab66", r: "#fe7970", t: "#54d1b6", y: "#54d1b6" }[kind];
  return (
    <g>
      <rect x={x - w / 2 - 1} y={y - 9} width={w + 2} height="18" rx="1.500" fill="#fff" opacity=".85" />
      <rect x={x - w / 2} y={y - 8} width={w} height="16" rx="1" fill={base} />
      {kind === "t" && <rect x={x - w / 2} y={y - 8} width={w} height="4" fill="#ee6a63" />}
      {kind === "y" && <rect x={x - w / 2} y={y - 8} width={w} height="4" fill="#dcb138" />}
      <text x={x} y={y + (kind === "t" || kind === "y" ? 5 : 4)} fontSize="11.500" fill="#fff" textAnchor="middle">{name}</text>
    </g>
  );
};

const Place = ({ row, station }) => {
  const [s, px, py, icon, lx, lines] = row;
  const [x, y] = at(s, px, py);
  return (
    <g>
      <g transform={`translate(${x} ${y})`}>
        {station
          ? <path d="M-10-13h20q2 0 2 2V9q0 2-2 2H5L0 17-5 11h-5q-2 0-2-2v-20q0-2 2-2z" fill="#5387f0" />
          : <path d="M0 17L-4.500 11.500A12 12 0 1 1 4.500 11.500z" fill="url(#pin)" stroke="#fff" strokeOpacity=".7" />}
        {GLYPHS[icon]}
      </g>
      {lines.map(([ly, text]) => {
        const [tx, ty] = at(s, lx, ly);
        return <Label key={text} x={tx} y={ty} size={15.900} color={station ? "#5585e8" : "#2f9f78"}>{text}</Label>;
      })}
    </g>
  );
};

const ZONE = [
  ["c", 1031, 322], ["c", 1045, 337], ["c", 1160, 312], ["c", 1260, 378], ["c", 1369, 595], ["d", 1363, 27], ["d", 1440, 18],
  ["f", 748, 238], ["f", 135, 756], ["d", 938, 768], ["d", 800, 76], ["d", 955, 117], ["d", 1060, 38],
].map((p) => at(...p).map((n) => n.toFixed(1)).join(",")).join(" ");
const TRACE = [["c", 1287, 760], ["c", 1298, 806], ["c", 1320, 812], ["c", 1340, 806], ["d", 1346, 0], ["d", 1350, 38], ["d", 1395, 32]]
  .map((p) => at(...p).join(",")).join(" ");

const EndMarker = ({ x, y, color, children }) => (
  <g transform={`translate(${x} ${y})`}>
    <path d="M0 31L-8 19.500A21.500 21.500 0 1 1 8 19.500z" fill={color} />
    <circle r="18.500" fill="#fff" />
    <text y="7.500" fontSize="20" fill={color} textAnchor="middle">{children}</text>
  </g>
);

const BaiduLogo = () => (
  <g transform="translate(63 938)" stroke="#fff" strokeWidth="3" paintOrder="stroke" strokeLinejoin="round">
    <text x="1" y="33" fontSize="21" fontWeight="700" fill="#e10602" fontFamily="Liberation Sans" textLength="33">Bai</text>
    <text x="65" y="32" fontSize="16.500" fontWeight="900" fill="#e10602" textLength="32">地图</text>
    <g fill="#2319dc">
      <path d="M49 15q6 0 9 8 6 6 2 11-3 3-11 2-8 1-11-2-4-5 2-11 3-8 9-8z" />
      <ellipse cx="38.500" cy="14.500" rx="3.800" ry="5" /><ellipse cx="45" cy="6.500" rx="3.600" ry="5" />
      <ellipse cx="54" cy="6.500" rx="3.600" ry="5" /><ellipse cx="60.500" cy="14.500" rx="3.800" ry="5" />
    </g>
    <text x="49" y="33" fontSize="14" fontWeight="700" fill="#fff" stroke="none" textAnchor="middle" fontFamily="Liberation Sans">du</text>
  </g>
);

const BeijingMap = () => (
  <MapSvg viewBox="59 398 2418 607">
    <defs>
      <linearGradient id="pin" x1="0" y1="0" x2="0" y2="1"><stop offset="0" stopColor="#48cf86" /><stop offset="1" stopColor="#14b479" /></linearGradient>
    </defs>
    <rect x="59" y="398" width="2418" height="607" fill="#f5f3f0" />
    <path d={join(area, PARKS)} fill="#c6f0d4" />
    <path d={join(area, FOREST_MID)} fill="#7ce7a4" />
    <path d={join(area, FOREST_DARK)} fill="#54de8b" />
    <path d={join(area, FOREST_LIGHT)} fill="#a4f2c1" />
    <path d={join(area, WATER_AREAS)} fill="#b6d9ff" />
    <g fill="none" strokeLinejoin="round" strokeLinecap="round">
      <path d={line("b", "700,-60 725,0 760,45 800,45 830,10")} stroke="#c6f0d4" strokeWidth="3" />
      <path d={join(line, WATER)} stroke="#b9dcfb" strokeWidth="1.800" />
      <path d={join(line, RIVERS)} stroke="#b6d9ff" strokeWidth="4.500" />
      <path d={join(line, RAILS)} stroke="#c4c4c4" strokeWidth="2.600" />
      <path d={join(line, RAILS)} stroke="#fff" strokeWidth="1.300" />
      <path d={join(line, RAILS)} stroke="#8e8e8e" strokeWidth="2" strokeDasharray="13 17" strokeLinecap="butt" />
      <path d={join(line, LOCAL)} stroke="#fbd49b" strokeWidth="4.600" />
      <path d={join(line, LOCAL)} stroke="#ffe6b5" strokeWidth="2.800" />
      <path d={join(line, RINGS)} stroke="#ffd163" strokeWidth="6" />
      <path d={join(line, HIGHWAYS)} stroke="#ffb274" strokeWidth="6.400" />
    </g>
    <circle cx="1531" cy="627" r="7.500" fill="#ffc95a" /><circle cx="1531" cy="627" r="2.500" fill="#f5f3f0" />
    {Object.entries(SHIELDS).flatMap(([s, list]) => list.split(" ").map((row, i) => {
      const [x, y, name, kind] = row.split(",");
      const [cx, cy] = at(s, +x, +y);
      return <Shield key={s + i} x={cx} y={cy} name={name} kind={kind} />;
    }))}
    {VILLAGES.map(([s, x, y, text, size]) => {
      const [cx, cy] = at(s, x, y);
      return <Label key={text} x={cx} y={cy} size={size || 14.600} color="#8c9bc0" anchor="middle">{text}</Label>;
    })}
    <Label x={1337} y={483} size={18.500} color="#6d9be0" anchor="middle" rotate={34}>温榆河</Label>
    <Label x={2229} y={466} size={16} color="#6d9be0" anchor="middle" rotate={-17}>泃河</Label>
    {PLACES.map((row) => <Place key={row[5][0][1]} row={row} />)}
    {STATIONS.map((row) => <Place key={row[5][0][1]} row={row} station />)}
    {DISTRICTS.map(([s, x, y, text, size]) => {
      const [cx, cy] = at(s, x, y);
      return <Label key={text} x={cx} y={cy} size={size || 18.500} color="#4f5468" anchor="middle">{text}</Label>;
    })}
    {ROAD_NAMES.map(([s, x, y, text, r, size]) => {
      const [cx, cy] = at(s, x, y);
      return <Label key={text} x={cx} y={cy} size={size || 18.500} weight={500} color="#2d2e33" anchor="middle" rotate={r}>{text}</Label>;
    })}
    <polygon points={ZONE} fill="#ff8800" fillOpacity=".4" stroke="#cc0000" strokeWidth="5" strokeLinejoin="round" />
    <polyline points={TRACE} fill="none" stroke="#767676" strokeWidth="5" strokeLinejoin="round" />
    <EndMarker x={1223.300} y={615} color="#ffa30a">起</EndMarker>
    <EndMarker x={1267.900} y={668.500} color="#05d987">终</EndMarker>
    <BaiduLogo />
    <g transform="translate(2409.500 437.500)">
      <circle cy="2" r="26.500" fill="#000" opacity=".18" />
      <circle r="26" fill="#f8f9fc" stroke="#a9a9a9" strokeWidth="1.500" />
      {[0, 90, 180, 270].map((a) => (
        <path key={a} d="M-6-14L0-19.500 6-14" transform={`rotate(${a})`} fill="none" stroke="#4a7edb" strokeWidth="3.600" />
      ))}
    </g>
  </MapSvg>
);

const TABS = [
  ["react", "React App"], ["react", "React App", true], ["react", "React App"], ["react", "React App"],
  ["globe", "404 Not Found"], ["mock", "Easy Mock"], ["globe2", "api.m.sohu.com"],
];
const tabIcon = {
  react: <ReactFavicon />, mock: <EasyMockIcon />,
  globe: <MdPublic size={25} color="#5f6368" />, globe2: <MdPublic size={25} color="#7f8c8e" />,
};
const folder = <MdOutlineFolder size={30} color="#5f6368" />;
const GoogleDisc = styled(FcGoogle)`
  background: #fff; border-radius: 50%; padding: 2px;
`;
const BOOKMARKS = [
  [101, 5, <MdStar size={28} color="#1f1f1f" />, "书签"],
  [141, 8, folder, "Finished"], [186.500, 8, folder, "Development"], [140, 8, folder, "官方文档"],
  [194.500, 8, folder, "在线访问 | 开源"], [193, 8, folder, "在线项目 | 官方"], [103.500, 8, folder, "Doc"],
  [141, 8, folder, "开发参考"], [141.500, 8, folder, "开发手册"],
  [75.500, 9, <GoogleDisc size={24} />, "G"],
  [231.500, 9, <PandaIcon />, "FusionDesign设计..."], [206, 8, <ParrotIcon />, "前端不外传的纸条"],
  [228, 7, <MdPublic size={26} color="#1f1f1f" />, "你就是星光 - 博客园"], [401, 9, <ZhiBadge>知</ZhiBadge>, "20分钟理解什么是..."],
];
const INFO = [
  ["用车模式", "停车点"], ["订单编号", "T1803244422704080JGJI"], ["车辆编号", "802410001"], ["用户姓名", "贺杰"], ["手机号码", "13597482075"],
];

export default function App() {
  return (
    <Window>
      <Global />
      <TabStrip>
        <SearchTabs><MdKeyboardArrowDown size={22} /></SearchTabs>
        <Pinned $w={73} $pad={5}><FaGithub size={24} color="#24292f" /></Pinned>
        <Divider />
        <Pinned $w={65}><MdPublic size={25} color="#5f6368" /></Pinned>
        {TABS.map(([icon, title, active], i) => (
          <TabSlot key={i}>
            <Divider $hidden={i === 1 || i === 2} />
            <TabBody $active={active}>
              {tabIcon[icon]}
              <TabTitle>{title}</TabTitle>
              <MdClose size={20} />
            </TabBody>
          </TabSlot>
        ))}
        <Divider />
        <Pinned $w={46}><MdAdd size={25} /></Pinned>
        <WinButtons>
          <svg viewBox="0 0 69 24" fill="none" stroke="#1f1f1f" strokeWidth="1.500"><path d="M27 11.500h15" /></svg>
          <svg viewBox="0 0 69 24" fill="none" stroke="#1f1f1f" strokeWidth="1.500"><rect x="27" y="7" width="12" height="12" rx="2" /><path d="M30 4.500h8q4 0 4 4v8" /></svg>
          <svg viewBox="0 0 69 24" fill="none" stroke="#1f1f1f" strokeWidth="1.500"><path d="M27 4.500l15 15M42 4.500l-15 15" /></svg>
        </WinButtons>
      </TabStrip>
      <Chrome>
        <ChromeInner>
          <Toolbar>
            <NavGroup>
              <NavButton $dim><MdArrowBack size={27} /></NavButton>
              <NavButton $dim><MdArrowForward size={27} /></NavButton>
              <NavButton><MdRefresh size={28} /></NavButton>
              <NavButton><HomeIcon /></NavButton>
            </NavGroup>
            <Omnibox>
              <InfoChip><MdInfoOutline size={25} /></InfoChip>
              <Url>http://localhost:3000/#/common/order/detail/2959165</Url>
              <OmniIcons><MdZoomOut size={28} /><MdStarBorder size={28} /></OmniIcons>
            </Omnibox>
            <Extensions>
              <Slot $w={55}><TranslateIcon /></Slot>
              <Slot $w={53}><HexIcon /></Slot>
              <Slot $w={52}><MdOutlineExtension size={30} /></Slot>
              <Slot $w={31}><ToolDivider /></Slot>
              <Slot $w={50}><PanelIcon /></Slot>
              <Slot $w={54}><Avatar /></Slot>
              <Slot $w={28}><MdMoreVert size={28} /></Slot>
            </Extensions>
          </Toolbar>
          <Bookmarks>
            {BOOKMARKS.map(([w, gap, icon, text]) => (
              <Bookmark key={text} $w={w} $gap={gap}>{icon}<span>{text}</span></Bookmark>
            ))}
            <MdKeyboardDoubleArrowRight size={25} />
          </Bookmarks>
        </ChromeInner>
      </Chrome>
      <Viewport>
        <Page>
          <Header>
            <Brand><BrandLogo /><span>IMooc 通用管理系统</span></Brand>
            <UserArea><span>欢迎，河畔一角</span><Logout>退出</Logout></UserArea>
          </Header>
          <Card>
            <MapBox>
              <BeijingMap />
              <ScaleBar>10 公里</ScaleBar>
              <ZoomControl>
                <ZoomButton><svg width="13" height="13"><path d="M6.500 1v11M1 6.500h11" stroke="#4a7edb" strokeWidth="2.500" /></svg></ZoomButton>
                <Track $h={66} />
                <ZoomButton $h={13}><svg width="13" height="5"><path d="M0 2.500h13" stroke="#4a7edb" strokeWidth="3" /></svg></ZoomButton>
                <Track $h={59} $filled />
                <ZoomButton><svg width="13" height="5"><path d="M1 2.500h11" stroke="#4a7edb" strokeWidth="2.500" /></svg></ZoomButton>
              </ZoomControl>
              <Copyright>© 2024 Baidu - GS(2023)3206号 - 甲测资字11111342 - 京ICP证030173号 - Data © 百度智图</Copyright>
            </MapBox>
            <Detail>
              <SectionTitle>基础信息</SectionTitle>
              <InfoList>
                {INFO.map(([k, v]) => (
                  <InfoRow key={k}><InfoLabel>{k}</InfoLabel><InfoValue $latin={/\d/.test(v)}>{v}</InfoValue></InfoRow>
                ))}
              </InfoList>
              <Rule />
              <SectionTitle>行驶轨迹</SectionTitle>
            </Detail>
          </Card>
        </Page>
        <ScrollRail>
          <ScrollArrow $up />
          <ScrollThumb />
          <ScrollArrow />
        </ScrollRail>
      </Viewport>
    </Window>
  );
}
